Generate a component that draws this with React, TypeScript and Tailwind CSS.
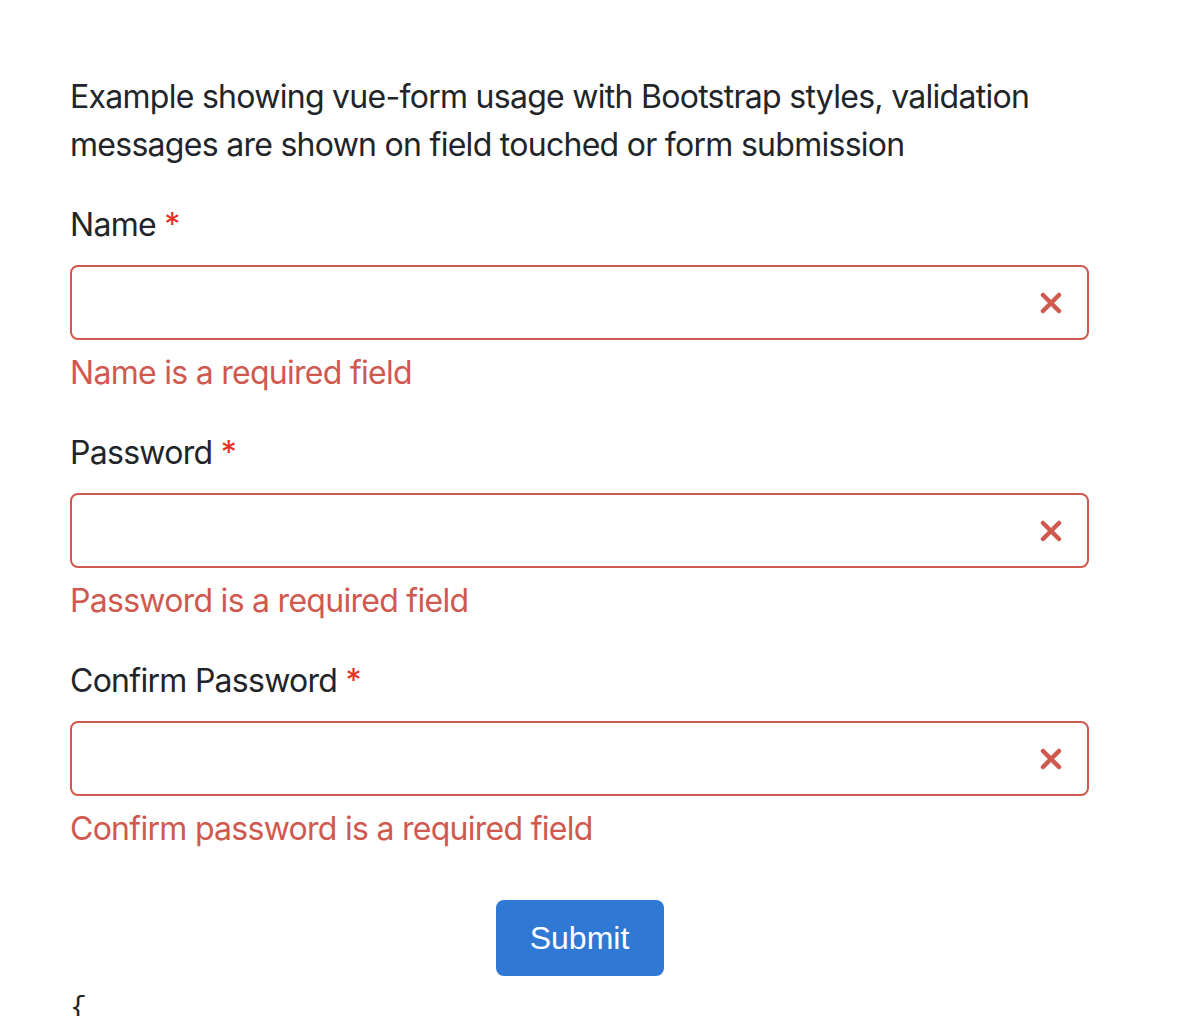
import React from 'react';

interface FieldProps {
  label: string;
  error: string;
  type?: string;
}

const Field = ({ label, error, type = 'text' }: FieldProps) => {
  return (
    <div className="flex flex-col">
      <label className="text-[#212529]">
        {label} <span className="text-[#e3301f]">*</span>
      </label>
      <div className="relative mt-4">
        <input
          type={type}
          className="block h-[75px] w-full rounded-lg border-2 border-[#d0594f] bg-white px-6 outline-none"
        />
        {/* 에러 아이콘 */}
        <svg
          className="absolute right-[27px] top-1/2 -translate-y-1/2"
          width="22"
          height="22"
          viewBox="0 0 22 22"
          fill="none"
        >
          <path
            d="M3 3L19 19M19 3L3 19"
            stroke="#d0594f"
            strokeWidth="4.5"
            strokeLinecap="round"
          />
        </svg>
      </div>
      <p className="mt-[9px] text-[#d0594f]">{error}</p>
    </div>
  );
};

const App = () => {
  return (
    <div className="min-h-screen bg-white font-['Inter','Noto_Sans',sans-serif] text-[32px] leading-[48px] tracking-[-0.72px]">
      <div className="w-[1089px] pl-[70px] pt-[73px]">
        <p className="text-[#212529]">
          Example showing vue-form usage with Bootstrap styles, validation
          messages are shown on field touched or form submission
        </p>

        <form className="mt-8 flex flex-col gap-8" onSubmit={(e) => e.preventDefault()}>
          <Field label="Name" error="Name is a required field" />
          <Field label="Password" error="Password is a required field" type="password" />
          <Field
            label="Confirm Password"
            error="Confirm password is a required field"
            type="password"
          />
        </form>

        <div className="mt-[47px] flex justify-center">
          <button
            type="submit"
            className="h-[76px] w-[168px] rounded-lg bg-[#2f78d4] font-['Liberation_Sans',sans-serif] text-[32px] tracking-normal text-white"
          >
            Submit
          </button>
        </div>

        <pre className="mt-2 font-['Liberation_Mono',monospace] text-[28px] text-[#212529]">{'{'}</pre>
      </div>
    </div>
  );
};

export default App;
